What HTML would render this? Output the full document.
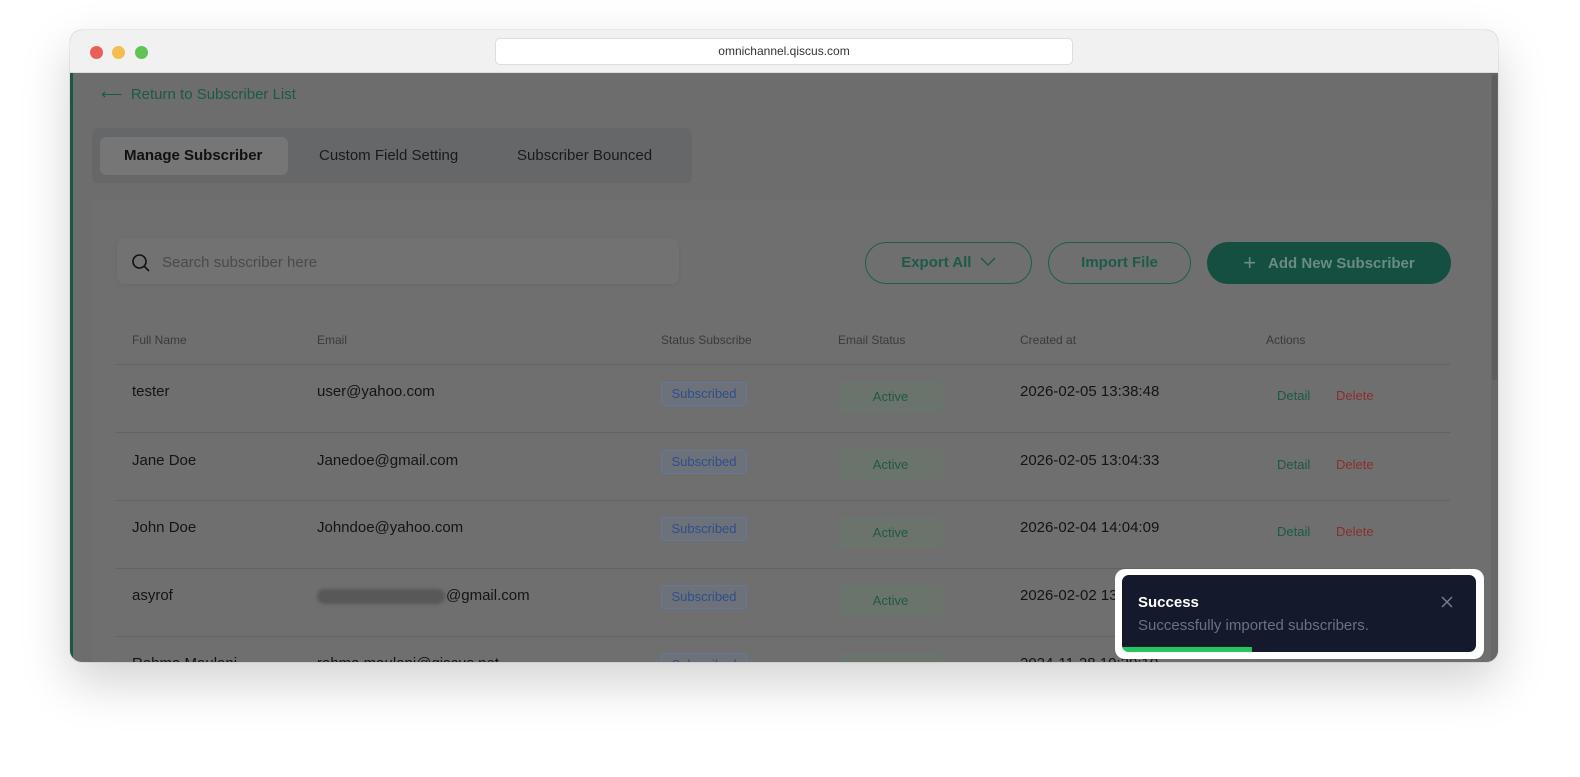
<!DOCTYPE html>
<html><head><meta charset="utf-8"><style>
*{box-sizing:border-box;margin:0;padding:0}
body{width:1580px;height:777px;background:#fff;font-family:"Liberation Sans",sans-serif;position:relative;overflow:hidden}
.win{position:absolute;left:70px;top:30px;width:1428px;height:632px;border-radius:12px;overflow:hidden;box-shadow:0 20px 50px rgba(0,0,0,.18),0 0 0 1px rgba(0,0,0,.06);background:#6d6d6d}
.tb{position:absolute;left:0;top:0;width:100%;height:43px;background:#f1f1f1;border-bottom:1px solid #ddd}
.dot{position:absolute;top:16px;width:13px;height:13px;border-radius:50%}
.url{position:absolute;left:425px;top:8px;width:578px;height:27px;background:#fff;border:1px solid #ddd;border-radius:5px;font-size:12px;color:#333;text-align:center;line-height:25px}
.a{position:absolute;white-space:nowrap}
.strip{position:absolute;left:0;top:43px;width:3px;height:589px;background:#1d5646}
.sb{position:absolute;left:1421px;top:43px;width:7px;height:589px;background:#676767}
.sbt{position:absolute;left:1422px;top:45px;width:5px;height:305px;background:#5e5e5e;border-radius:3px}
.card{position:absolute;left:22px;top:170px;width:1398px;height:480px;background:#6f6f6f;border-radius:8px}
.tabs{position:absolute;left:22px;top:98px;width:600px;height:55px;background:#666768;border-radius:6px}
.tab1{position:absolute;left:30px;top:107px;width:188px;height:38px;background:#767676;border-radius:6px}
.srch{position:absolute;left:47px;top:208px;width:562px;height:46px;background:#727272;border-radius:8px;box-shadow:0 1px 4px rgba(0,0,0,.06)}
.btn{position:absolute;top:212px;height:42px;border:1.5px solid #1d5e4e;border-radius:21px;color:#1c5a4a;font-size:15px;font-weight:bold;text-align:center;line-height:39px}
.hd{font-size:12px;color:#3a3a3a;top:303px}
.line{position:absolute;left:45px;width:1335px;height:1px;background:#636363}
.cell{font-size:15px;color:#141414}
.sub{position:absolute;width:86px;height:24px;border:1px solid #66789a;border-radius:4px;color:#2e4f8a;font-size:13px;text-align:center;line-height:22px;background:#6d717a}
.act{position:absolute;width:105px;height:32px;background:#6a746c;border-radius:5px;color:#1f5a40;font-size:13px;text-align:center;line-height:32px}
.det{font-size:13px;color:#1a5a46}
.del{font-size:13px;color:#8a2e2e}
</style></head><body>
<div class="win">
<div class="tb"><div class="dot" style="left:20px;background:#ec5f57"></div><div class="dot" style="left:42px;background:#f4bd4f"></div><div class="dot" style="left:65px;background:#5fc453"></div><div class="url">omnichannel.qiscus.com</div></div>
<div class="strip"></div>
<div class="a" style="left:31px;top:55px;font-size:15px;color:#1a5a48">⟵&nbsp; Return to Subscriber List</div>
<div class="tabs"></div><div class="tab1"></div>
<div class="a" style="left:54px;top:117px;font-size:15px;font-weight:bold;color:#111">Manage Subscriber</div>
<div class="a" style="left:249px;top:117px;font-size:15px;color:#1a1a1a">Custom Field Setting</div>
<div class="a" style="left:447px;top:117px;font-size:15px;color:#1a1a1a">Subscriber Bounced</div>
<div class="card"></div>
<div class="srch"></div>
<svg class="a" style="left:61px;top:223px" width="20" height="20" viewBox="0 0 20 20"><circle cx="8.5" cy="8.5" r="6.5" fill="none" stroke="#111" stroke-width="1.6"/><path d="M13.3 13.3L18 18" stroke="#111" stroke-width="1.6"/></svg>
<div class="a" style="left:92px;top:224px;font-size:15px;color:#4a4a4a">Search subscriber here</div>
<div class="btn" style="left:795px;width:167px">Export All &nbsp;<svg width="16" height="10" viewBox="0 0 16 10"><path d="M1 1l7 7 7-7" fill="none" stroke="#1c5a4a" stroke-width="1.5"/></svg></div>
<div class="btn" style="left:978px;width:143px">Import File</div>
<div class="btn" style="left:1137px;width:244px;background:#154f42;border-color:#154f42;color:#6a8c82"><span style="font-weight:normal;font-size:22px;vertical-align:-2px">+</span>&nbsp;&nbsp; Add New Subscriber</div>
<div class="a hd" style="left:62px">Full Name</div><div class="a hd" style="left:247px">Email</div><div class="a hd" style="left:591px">Status Subscribe</div><div class="a hd" style="left:768px">Email Status</div><div class="a hd" style="left:950px">Created at</div><div class="a hd" style="left:1196px">Actions</div>
<div class="line" style="top:334px"></div><div class="line" style="top:402px"></div><div class="line" style="top:470px"></div><div class="line" style="top:538px"></div><div class="line" style="top:606px"></div>

<div class="a cell" style="left:62px;top:353px">tester</div><div class="a cell" style="left:247px;top:353px">user@yahoo.com</div>
<div class="sub" style="left:591px;top:352px">Subscribed</div><div class="act" style="left:768px;top:351px">Active</div>
<div class="a cell" style="left:950px;top:353px">2026-02-05 13:38:48</div><div class="a det" style="left:1207px;top:358px">Detail</div><div class="a del" style="left:1266px;top:358px">Delete</div>

<div class="a cell" style="left:62px;top:422px">Jane Doe</div><div class="a cell" style="left:247px;top:422px">Janedoe@gmail.com</div>
<div class="sub" style="left:591px;top:420px">Subscribed</div><div class="act" style="left:768px;top:419px">Active</div>
<div class="a cell" style="left:950px;top:422px">2026-02-05 13:04:33</div><div class="a det" style="left:1207px;top:427px">Detail</div><div class="a del" style="left:1266px;top:427px">Delete</div>

<div class="a cell" style="left:62px;top:489px">John Doe</div><div class="a cell" style="left:247px;top:489px">Johndoe@yahoo.com</div>
<div class="sub" style="left:591px;top:487px">Subscribed</div><div class="act" style="left:768px;top:487px">Active</div>
<div class="a cell" style="left:950px;top:489px">2026-02-04 14:04:09</div><div class="a det" style="left:1207px;top:494px">Detail</div><div class="a del" style="left:1266px;top:494px">Delete</div>

<div class="a cell" style="left:62px;top:557px">asyrof</div>
<div class="a" style="left:247px;top:559px;width:128px;height:15px;background:#585858;border-radius:8px;filter:blur(1.5px)"></div>
<div class="a cell" style="left:376px;top:557px">@gmail.com</div>
<div class="sub" style="left:591px;top:555px">Subscribed</div><div class="act" style="left:768px;top:555px">Active</div>
<div class="a cell" style="left:950px;top:557px">2026-02-02 13:00:00</div>

<div class="a cell" style="left:62px;top:625px">Rahma Maulani</div><div class="a cell" style="left:247px;top:625px">rahma.maulani@qiscus.net</div>
<div class="sub" style="left:591px;top:623px">Subscribed</div><div class="act" style="left:768px;top:623px">Active</div>
<div class="a cell" style="left:950px;top:625px">2024-11-28 10:20:10</div>

<div class="sb"></div><div class="sbt"></div>

<div class="a" style="left:1045px;top:539px;width:369px;height:90px;background:#fff;border-radius:10px"></div>
<div class="a" style="left:1052px;top:545px;width:354px;height:77px;background:#141a2b;border-radius:7px;overflow:hidden">
<div class="a" style="left:16px;top:19px;font-size:15px;font-weight:bold;color:#fff">Success</div>
<div class="a" style="left:16px;top:42px;font-size:15px;color:#6b7180">Successfully imported subscribers.</div>
<svg class="a" style="left:318px;top:20px" width="14" height="14" viewBox="0 0 14 14"><path d="M2 2l10 10M12 2L2 12" stroke="#777d8a" stroke-width="1.5"/></svg>
<div class="a" style="left:0;top:72px;width:130px;height:5px;background:#22c55e"></div>
</div>
</div>
</body></html>
